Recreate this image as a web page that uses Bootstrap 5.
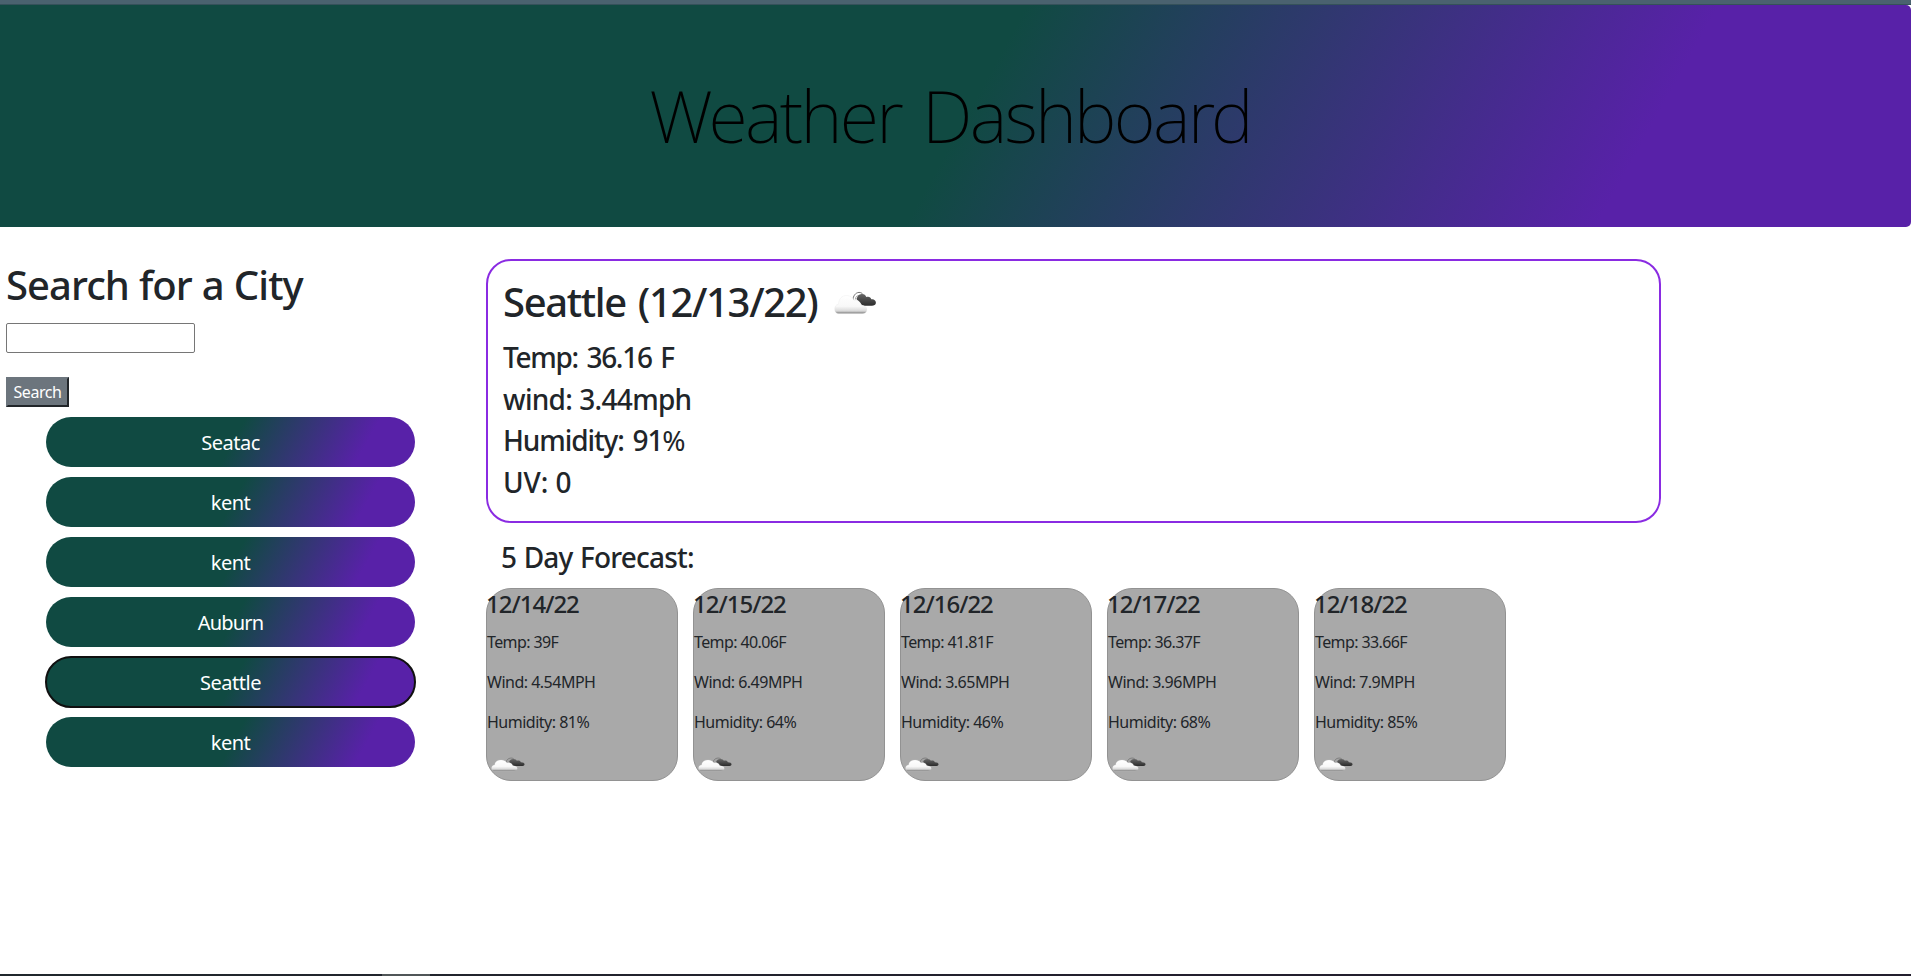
<!DOCTYPE html>
<html lang="en">
<head>
<meta charset="utf-8">
<meta name="viewport" content="width=device-width, initial-scale=1">
<title>Weather Dashboard</title>
<link href="https://cdn.jsdelivr.net/npm/bootstrap@5.3.0/dist/css/bootstrap.min.css" rel="stylesheet">
<style>
:root{--fade:linear-gradient(119deg,#104a42 50.5%,#5821a8 84.5%)}
body{font-family:"Noto Sans","Open Sans",sans-serif;color:#212529;height:976px;overflow:hidden}
h1,h3,h4{font-weight:500;line-height:1.2}
h1{font-size:40px;letter-spacing:-.95px;word-spacing:.6px}
h3{font-size:28px;letter-spacing:-1.1px;word-spacing:2.6px}
.top-strip{height:5px;background:#4a626f;border-bottom:1px solid #35515a}
.banner{height:222px;background:var(--fade);border-radius:0 5px 5px 0;color:#000;padding:67px 11px 0 0;text-align:center}
.banner h1{font-size:72px;font-weight:250;letter-spacing:-2.75px;word-spacing:5px;line-height:86px}
.search-col{width:486px;padding:34px 0 0 6px}
.search-col h1{margin-bottom:14px}
.city-input{width:189px;height:30px;border:1px solid #767676;border-radius:2px;padding:0 4px}
.search-btn{width:63px;height:30px;margin-top:24px;padding:0;border:2px solid;border-color:#6c757d #212529 #212529 #6c757d;background:#6c757d;color:#fff;font-size:16px;line-height:26px;letter-spacing:-.45px}
.city-list{margin:10px 0 0 40px;width:369px;gap:10px}
.city{height:50px;border:0;border-radius:25px;background:var(--fade);color:#fff;font-size:20px;line-height:30px;letter-spacing:-.5px;padding:2px 0 0 0}
.city.active-city{outline:2px solid #101010;outline-offset:-1px}
.city.snug{letter-spacing:-.8px}
.current{width:1175px;height:264px;margin-top:32px;border:2px solid #8a2be2;border-radius:25px;padding:15px}
.current .place{height:57px;margin-bottom:8px;line-height:51px;letter-spacing:-1.35px;word-spacing:3px}
.current .place svg{margin:3px 0 0 12px;display:block}
.current h3{margin-bottom:8px;line-height:33.6px}
.current .tight{letter-spacing:-1.3px}
.current .wide{letter-spacing:-.7px;word-spacing:.5px}
.current .uv{letter-spacing:-.1px;word-spacing:0}
.light-pct{font-weight:400}
.forecast-title{margin:18px 0 0 15px;line-height:33.6px;letter-spacing:-.8px;word-spacing:1px}
.days{margin-top:13px;gap:15px}
.day{width:192px;height:193px;background:#a9a9a9;border:1px solid #929292;border-radius:25px;font-size:16px}
.day h4{font-size:24px;line-height:28.8px;letter-spacing:-1px;margin:1px 0 12px -1px}
.day p{line-height:24px;margin-bottom:16px;letter-spacing:-.5px}
.day .temp{letter-spacing:-.6px}
.day svg{display:block;margin-top:1px}
.bottom-strip{height:2px;background:linear-gradient(90deg,#20282d,#231f2e 60%)}
.bottom-strip span{display:block;width:48px;height:2px;margin-left:382px;background:#505658}
</style>
</head>
<body class="d-flex flex-column">
<svg width="0" height="0" class="position-absolute">
  <defs>
    <linearGradient id="white" x1="0" y1="0" x2="0" y2="1"><stop offset="0" stop-color="#fff"/><stop offset=".6" stop-color="#f8f8f8"/><stop offset=".86" stop-color="#d8d8d8"/><stop offset="1" stop-color="#777"/></linearGradient>
    <linearGradient id="dark" x1="0" y1="0" x2="0" y2="1"><stop offset="0" stop-color="#666"/><stop offset="1" stop-color="#2c2c2c"/></linearGradient>
    <symbol id="cloud" viewBox="0 0 50 50" preserveAspectRatio="none">
      <path d="M24 21c0-4 2.500-7.400 6-7.600 1.900 0 3.200.8 3.800 2" fill="none" stroke="#666" stroke-width=".9"/>
      <path d="M26.300 20.500c.3-3 2-4.200 3.700-3.700" fill="none" stroke="#888" stroke-width=".7"/>
      <path d="M27.500 20c1-2.400 2-4.800 5.300-4.900 2.600 0 3.800 1.300 4.500 2.900 2.500-1 4.500.2 5 2.300 3.500-.1 4.800 2 4.600 3.700-.2 1.900-1.900 2.700-4 2.700H35c-3 0-3-3.400-5.500-4.200z" fill="url(#dark)"/>
      <path d="M9.500 34.600c-2.300 0-3.800-1.800-3.800-4.300 0-2.600 1.300-4.800 3.800-5.200.3-5.500 3.600-8.600 8-8.600 4 0 6.300 2.200 7.500 5.100 4-1.200 6.500 1 7 4.700 3.600 0 5.900 1.600 5.900 4.200 0 2.500-1.800 4.100-4.300 4.100z" fill="url(#white)" stroke="#ddd" stroke-width=".25"/>
    </symbol>
  </defs>
</svg>
<div class="top-strip flex-shrink-0"></div>
<header class="banner flex-shrink-0"><h1 class="m-0">Weather Dashboard</h1></header>
<main class="d-flex flex-grow-1">
  <aside class="search-col flex-shrink-0">
    <h1>Search for a City</h1>
    <input class="city-input d-block" type="text" aria-label="City">
    <button class="search-btn d-block">Search</button>
    <div class="city-list d-flex flex-column">
      <button class="city">Seatac</button>
      <button class="city">kent</button>
      <button class="city">kent</button>
      <button class="city snug">Auburn</button>
      <button class="city active-city">Seattle</button>
      <button class="city">kent</button>
    </div>
  </aside>
  <section>
    <div class="current">
      <h1 class="place d-flex align-items-start">Seattle (12/13/22) <svg width="50" height="50"><use href="#cloud"/></svg></h1>
      <h3 class="tight">Temp: 36.16 F</h3>
      <h3 class="wide">wind: 3.44mph</h3>
      <h3>Humidity: 91<span class="light-pct">%</span></h3>
      <h3 class="uv">UV: 0</h3>
    </div>
    <h3 class="forecast-title">5 Day Forecast:</h3>
    <div class="days d-flex">
      <div class="day"><h4>12/14/22</h4><p class="temp">Temp: 39F</p><p>Wind: 4.54MPH</p><p>Humidity: 81%</p><svg width="40" height="30"><use href="#cloud"/></svg></div>
      <div class="day"><h4>12/15/22</h4><p class="temp">Temp: 40.06F</p><p>Wind: 6.49MPH</p><p>Humidity: 64%</p><svg width="40" height="30"><use href="#cloud"/></svg></div>
      <div class="day"><h4>12/16/22</h4><p class="temp">Temp: 41.81F</p><p>Wind: 3.65MPH</p><p>Humidity: 46%</p><svg width="40" height="30"><use href="#cloud"/></svg></div>
      <div class="day"><h4>12/17/22</h4><p class="temp">Temp: 36.37F</p><p>Wind: 3.96MPH</p><p>Humidity: 68%</p><svg width="40" height="30"><use href="#cloud"/></svg></div>
      <div class="day"><h4>12/18/22</h4><p class="temp">Temp: 33.66F</p><p>Wind: 7.9MPH</p><p>Humidity: 85%</p><svg width="40" height="30"><use href="#cloud"/></svg></div>
    </div>
  </section>
</main>
<div class="bottom-strip flex-shrink-0"><span></span></div>
</body>
</html>
